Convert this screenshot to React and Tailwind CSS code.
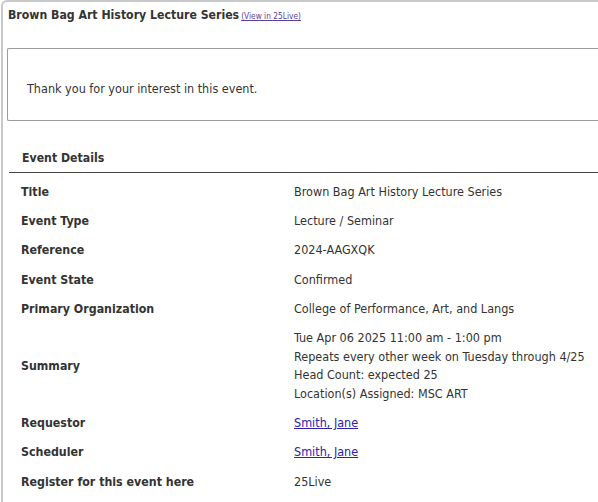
const rows = [
  { label: 'Title', value: ['Brown Bag Art History Lecture Series'] },
  { label: 'Event Type', value: ['Lecture / Seminar'] },
  { label: 'Reference', value: ['2024-AAGXQK'] },
  { label: 'Event State', value: ['Confirmed'] },
  { label: 'Primary Organization', value: ['College of Performance, Art, and Langs'] },
  {
    label: 'Summary',
    value: [
      'Tue Apr 06 2025 11:00 am - 1:00 pm',
      'Repeats every other week on Tuesday through 4/25',
      'Head Count: expected 25',
      'Location(s) Assigned: MSC ART',
    ],
  },
  { label: 'Requestor', link: 'Smith, Jane' },
  { label: 'Scheduler', link: 'Smith, Jane' },
  { label: 'Register for this event here', value: ['25Live'] },
]

export default function App() {
  return (
    <div className="min-h-[502px] bg-white font-['DejaVu_Sans_Condensed','DejaVu_Sans',sans-serif] text-[#333]">
      <div className="ml-px min-h-[502px] border-t-2 border-l-2 border-[#c6c8ca] rounded-tl-[6px]">
        {/* Header */}
        <div className="pl-[5px] pt-[4px] h-[46px] flex items-baseline gap-[2px]">
          <h1 className="text-[12.2px] font-bold leading-[18px]">Brown Bag Art History Lecture Series</h1>
          <a href="#" className="text-[8.3px] text-[#5b3f9a] underline">(View in 25Live)</a>
        </div>

        {/* Message box */}
        <div className="ml-[4px] h-[73px] border-[1.5px] border-r-0 border-[#9c9c9c] rounded-l-[2px] pl-[19px] pt-[31px]">
          <p className="text-[12.5px] leading-[18px]">Thank you for your interest in this event.</p>
        </div>

        {/* Event details */}
        <div className="ml-[6px] mt-[28px]">
          <div className="border-b-[1.5px] border-[#444] pl-[13px] pb-[5px]">
            <h2 className="text-[12.2px] font-bold leading-[18px]">Event Details</h2>
          </div>
          <div className="pt-[4.5px] grid grid-cols-[285px_1fr] items-center">
            {rows.map((r) => (
              <div key={r.label} className="contents">
                <div className="pl-[12px] py-[5.4px] text-[12.3px] font-bold leading-[18.5px]">{r.label}</div>
                <div className="py-[5.4px] text-[12.5px] leading-[18.5px]">
                  {r.link ? (
                    <a href="#" className="text-[#2a22b0] underline">{r.link}</a>
                  ) : (
                    r.value.map((v) => <div key={v}>{v}</div>)
                  )}
                </div>
              </div>
            ))}
          </div>
        </div>
      </div>
    </div>
  )
}
